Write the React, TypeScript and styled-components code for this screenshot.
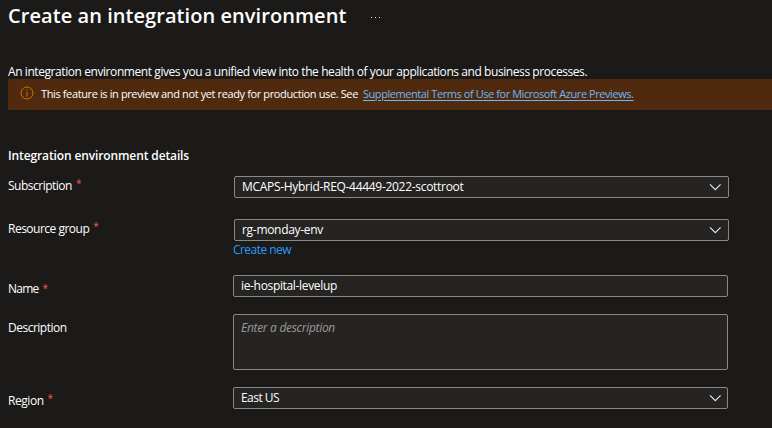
import React from 'react';
import styled, { createGlobalStyle } from 'styled-components';

const GlobalStyle = createGlobalStyle`
  *, *::before, *::after { box-sizing: border-box; }
  body { margin: 0; background: #1b1a19; overflow: hidden; }
`;

const Page = styled.main`
  width: 772px;
  height: 428px;
  padding-left: 8px;
  background: #1b1a19;
  color: #fff;
  font: 12px/16px "Segoe UI", "Open Sans", "Noto Sans", sans-serif;
  white-space: nowrap;
  overflow: hidden;
`;

const Text = styled.span<{ $track?: number }>`
  letter-spacing: ${({ $track = -0.3 }) => $track}px;
`;

const Header = styled.header`
  display: flex;
  height: 64px;
  padding-top: 2px;
`;

const Title = styled.h1`
  margin: 0;
  width: 362px;
  font-size: 20px;
  line-height: 28px;
  font-weight: 600;
`;

const MoreIcon = styled.svg`
  width: 11px;
  height: 2px;
  margin-top: 14px;
  fill: #e8e8e8;
`;

const Intro = styled.p`
  margin: 0;
  height: 15px;
`;

const Banner = styled.div`
  display: flex;
  align-items: flex-start;
  height: 31px;
  padding: 7px 0 0 12px;
  background: #4f2a0f;
  font-size: 11px;
`;

const InfoIcon = styled.svg`
  width: 14px;
  height: 14px;
  margin-right: 7px;
  fill: none;
  stroke: #d67300;
`;

const BannerLink = styled.a`
  margin-left: 5px;
  color: #6cb8f6;
  text-decoration: underline;
  text-underline-offset: 2px;
`;

const SectionTitle = styled.h2`
  margin: 38px 0 12px;
  font-size: 12px;
  line-height: 16px;
  font-weight: 600;
`;

const Row = styled.div<{ $height: number }>`
  display: flex;
  height: ${({ $height }) => $height}px;
`;

const Label = styled.label<{ $drop: number }>`
  display: flex;
  gap: 4px;
  width: 225px;
  padding-top: ${({ $drop }) => $drop}px;
`;

const Required = styled.span<{ $lift: number }>`
  margin-top: ${({ $lift }) => -$lift}px;
  font-size: 10px;
  color: #f1595b;
`;

const Control = styled.div<{ $inset?: number }>`
  width: 495px;
  margin-left: ${({ $inset = 0 }) => $inset}px;
`;

const Field = styled.div<{ $tall?: boolean }>`
  display: flex;
  justify-content: space-between;
  align-items: ${({ $tall }) => ($tall ? 'flex-start' : 'center')};
  height: ${({ $tall }) => ($tall ? 56 : 22)}px;
  padding: ${({ $tall }) => ($tall ? '5px 7px' : '0 7px')};
  border: 1px solid #8a8886;
  border-radius: 2px;
  background: #252423;
`;

const Placeholder = styled.em`
  color: #9b9997;
`;

const ChevronIcon = styled.svg<{ $shift?: number }>`
  width: 12px;
  height: 8px;
  margin-right: ${({ $shift = 0 }) => $shift}px;
  fill: none;
  stroke: #e0e4ea;
  stroke-width: 1.2;
`;

const CreateLink = styled.a`
  display: block;
  margin: 1px 0 0 -1px;
  color: #2899f5;
`;

const Chevron = ({ shift = 0 }: { shift?: number }) => (
  <ChevronIcon $shift={shift} viewBox="0 0 12 8">
    <path d="M1 1.3 6.3 6.6l5.3-5.3" />
  </ChevronIcon>
);

interface FieldLabelProps {
  text: string;
  drop: number;
  track?: number;
  lift?: number;
  required?: boolean;
}

const FieldLabel = ({ text, drop, track, lift = 2, required = true }: FieldLabelProps) => (
  <Label $drop={drop}>
    <Text $track={track}>{text}</Text>
    {required && <Required $lift={lift}>*</Required>}
  </Label>
);

export default function App() {
  return (
    <>
      <GlobalStyle />
      <Page>
        <Header>
          <Title><Text $track={0.06}>Create an integration environment</Text></Title>
          <MoreIcon viewBox="0 0 11 2">
            <rect x="1" y="1" width="1" height="1" />
            <rect x="5" y="1" width="1" height="1" />
            <rect x="9" y="1" width="1" height="1" />
          </MoreIcon>
        </Header>
        <Intro>
          <Text $track={-0.425}>An integration environment gives you a unified view into the health of your applications and business processes.</Text>
        </Intro>
        <Banner>
          <InfoIcon viewBox="0 0 14 14">
            <circle cx="7" cy="7" r="6" />
            <path d="M7 6v4.5M7 3.7v1.2" />
          </InfoIcon>
          <Text $track={-0.38}>This feature is in preview and not yet ready for production use. See</Text>
          <BannerLink><Text $track={-0.43}>Supplemental Terms of Use for Microsoft Azure Previews.</Text></BannerLink>
        </Banner>
        <SectionTitle><Text $track={-0.12}>Integration environment details</Text></SectionTitle>
        <Row $height={43}>
          <FieldLabel text="Subscription" drop={2} track={-0.5} lift={3} />
          <Control $inset={1}>
            <Field><Text>MCAPS-Hybrid-REQ-44449-2022-scottroot</Text><Chevron /></Field>
          </Control>
        </Row>
        <Row $height={56}>
          <FieldLabel text="Resource group" drop={2} track={-0.5} lift={3} />
          <Control $inset={1}>
            <Field><Text>rg-monday-env</Text><Chevron /></Field>
            <CreateLink><Text $track={-0.55}>Create new</Text></CreateLink>
          </Control>
        </Row>
        <Row $height={39}>
          <FieldLabel text="Name" drop={6} track={-0.75} lift={1} />
          <Control><Field><Text $track={-0.34}>ie-hospital-levelup</Text></Field></Control>
        </Row>
        <Row $height={73}>
          <FieldLabel text="Description" drop={6} track={-0.5} required={false} />
          <Control>
            <Field $tall><Placeholder><Text>Enter a description</Text></Placeholder></Field>
          </Control>
        </Row>
        <Row $height={41}>
          <FieldLabel text="Region" drop={6} track={-0.45} lift={3} />
          <Control><Field><Text $track={-0.55}>East US</Text><Chevron shift={-1} /></Field></Control>
        </Row>
      </Page>
    </>
  );
}
